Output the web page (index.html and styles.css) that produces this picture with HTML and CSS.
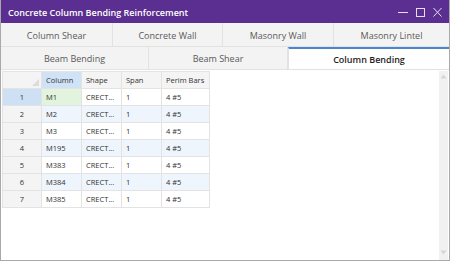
FILE: index.html
```html
<!DOCTYPE html>
<html lang="en">
<head>
  <meta charset="UTF-8">
  <title>Concrete Column Bending Reinforcement</title>
  <link rel="stylesheet" href="styles.css">
</head>
<body>
  <div class="window">
    <!-- Title bar -->
    <div class="titlebar">
      <span class="title">Concrete Column Bending Reinforcement</span>
      <div class="controls">
        <svg width="10" height="10" viewBox="0 0 10 10"><line x1="0" y1="5.5" x2="10" y2="5.5" stroke="#fff" stroke-width="1"/></svg>
        <svg width="9" height="10" viewBox="0 0 9 10"><rect x="0.5" y="1.5" width="8" height="8" fill="none" stroke="#fff" stroke-width="1"/></svg>
        <svg width="9" height="10" viewBox="0 0 9 10"><path d="M0.5 1 L8.5 9.5 M8.5 1 L0.5 9.5" stroke="#fff" stroke-width="1"/></svg>
      </div>
    </div>

    <!-- Tabs -->
    <div class="tab-row">
      <div class="tab" style="width:112px">Column Shear</div>
      <div class="tab" style="width:110px">Concrete Wall</div>
      <div class="tab" style="width:111px">Masonry Wall</div>
      <div class="tab last">Masonry Lintel</div>
    </div>
    <div class="tab-row second">
      <div class="tab" style="width:148px">Beam Bending</div>
      <div class="tab" style="width:139px">Beam Shear</div>
      <div class="tab active last">Column Bending</div>
    </div>

    <!-- Grid area -->
    <div class="content">
      <div class="grid-wrap">
        <table class="grid">
          <thead>
            <tr>
              <th class="corner"></th>
              <th class="col-sel">Column</th>
              <th>Shape</th>
              <th>Span</th>
              <th class="wide">Perim Bars</th>
            </tr>
          </thead>
          <tbody id="rows"></tbody>
        </table>
      </div>
      <div class="scrollbar">
        <svg width="7" height="5" viewBox="0 0 7 5"><path d="M0.5 4.5 L3.5 0.5 L6.5 4.5 Z" fill="#d6d6d6"/></svg>
        <svg width="7" height="5" viewBox="0 0 7 5"><path d="M0.5 0.5 L3.5 4.5 L6.5 0.5 Z" fill="#d6d6d6"/></svg>
      </div>
    </div>
  </div>

  <script>
    const rows = [
      ['M1', 'CRECT...', '1', '4 #5'],
      ['M2', 'CRECT...', '1', '4 #5'],
      ['M3', 'CRECT...', '1', '4 #5'],
      ['M195', 'CRECT...', '1', '4 #5'],
      ['M383', 'CRECT...', '1', '4 #5'],
      ['M384', 'CRECT...', '1', '4 #5'],
      ['M385', 'CRECT...', '1', '4 #5']
    ];
    const body = document.getElementById('rows');
    rows.forEach((r, i) => {
      const tr = document.createElement('tr');
      if (i % 2 === 1) tr.className = 'alt';
      const th = document.createElement('th');
      th.textContent = i + 1;
      if (i === 0) th.className = 'row-sel';
      tr.appendChild(th);
      r.forEach((v, j) => {
        const td = document.createElement('td');
        td.textContent = v;
        if (i === 0 && j === 0) td.className = 'cell-sel';
        tr.appendChild(td);
      });
      body.appendChild(tr);
    });
  </script>
</body>
</html>
```

FILE: styles.css
```css
/* Basic styling */
html, body {
  margin: 0;
  padding: 0;
  background: #ffffff;
}

body {
  font-family: 'Open Sans', 'Noto Sans', sans-serif;
}

/* Window frame */
.window {
  width: 450px;
  height: 261px;
  box-sizing: border-box;
  border: 1px solid #a9a9a9;
  border-top: none;
  display: flex;
  flex-direction: column;
  overflow: hidden;
}

/* Title bar */
.titlebar {
  height: 23px;
  background: #5b2e91;
  color: #ffffff;
  display: flex;
  align-items: center;
  justify-content: space-between;
  padding: 1px 8px 0 8px;
  box-sizing: border-box;
  margin: 0 -1px;
  flex-shrink: 0;
}

.title {
  font-size: 9px;
  font-weight: 600;
}

.controls {
  display: flex;
  gap: 8px;
  opacity: 0.85;
}

/* Tabs */
.tab-row {
  display: flex;
  height: 24px;
  flex-shrink: 0;
}

.tab-row.second {
  height: 23px;
}

.tab {
  box-sizing: border-box;
  height: 100%;
  background: #f3f3f3;
  border-right: 1px solid #e2e2e2;
  border-bottom: 1px solid #e2e2e2;
  color: #5a5a5a;
  font-size: 9px;
  display: flex;
  align-items: center;
  justify-content: center;
  padding-top: 1px;
}

.tab.last {
  flex: 1;
  border-right: none;
}

.tab.active {
  background: #ffffff;
  color: #1e1e1e;
  font-weight: 600;
  border-top: 2px solid #4a86d0;
  border-left: 1px solid #e2e2e2;
  padding-top: 0;
}

/* Content area */
.content {
  flex: 1;
  display: flex;
  padding-top: 1px;
}

.grid-wrap {
  flex: 1;
  padding-left: 1px;
}

/* Data grid */
.grid {
  border-collapse: collapse;
  font-size: 7.5px;
  color: #333333;
}

.grid th,
.grid td {
  height: 16px;
  padding: 0 4px;
  border: 1px solid #e3e3e3;
  text-align: left;
  font-weight: 400;
  white-space: nowrap;
}

.grid thead th {
  background: #f4f4f4;
  width: 31px;
}

.grid thead th.wide {
  width: 39px;
}

.grid thead th.corner {
  width: 30px;
  position: relative;
}

.grid thead th.corner::after {
  content: "";
  position: absolute;
  right: 2px;
  bottom: 2px;
  border-left: 7px solid transparent;
  border-bottom: 7px solid #dcdcdc;
}

.grid thead th.col-sel {
  background: #cfe2f6;
}

.grid tbody th {
  background: #f4f4f4;
  text-align: center;
}

.grid tbody th.row-sel {
  background: #cde0f4;
}

.grid tbody td.cell-sel {
  background: #e3f4de;
}

.grid tr.alt td {
  background: #eef5fd;
}

/* Scrollbar */
.scrollbar {
  width: 9px;
  background: #f1f1f1;
  display: flex;
  flex-direction: column;
  justify-content: space-between;
  align-items: center;
  padding: 3px 0 5px;
  box-sizing: border-box;
  margin-right: 1px;
}
```
